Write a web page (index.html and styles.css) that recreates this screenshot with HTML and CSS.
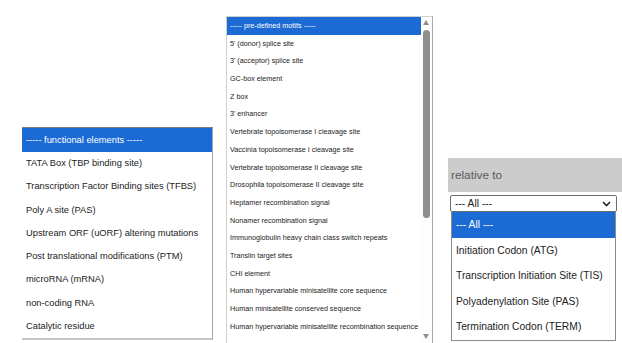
FILE: index.html
```html
<!DOCTYPE html>
<html lang="en">

<head>
    <meta charset="UTF-8">
    <meta name="viewport" content="width=device-width, initial-scale=1.0">
    <title>Motif selection</title>
    <link rel="stylesheet" href="styles.css">
</head>

<body>
    <div class="page">
        <!-- functional elements list -->
        <ul class="list list-functional">
            <li class="list-item selected">----- functional elements -----</li>
            <li class="list-item">TATA Box (TBP binding site)</li>
            <li class="list-item">Transcription Factor Binding sites (TFBS)</li>
            <li class="list-item">Poly A site (PAS)</li>
            <li class="list-item">Upstream ORF (uORF) altering mutations</li>
            <li class="list-item">Post translational modifications (PTM)</li>
            <li class="list-item">microRNA (mRNA)</li>
            <li class="list-item">non-coding RNA</li>
            <li class="list-item">Catalytic residue</li>
        </ul>

        <!-- pre-defined motifs list with scrollbar -->
        <div class="motifs">
            <ul class="list list-motifs">
                <li class="list-item selected">----- pre-defined motifs -----</li>
                <li class="list-item">5' (donor) splice site</li>
                <li class="list-item">3' (acceptor) splice site</li>
                <li class="list-item">GC-box element</li>
                <li class="list-item">Z box</li>
                <li class="list-item">3' enhancer</li>
                <li class="list-item">Vertebrate topoisomerase I cleavage site</li>
                <li class="list-item">Vaccinia topoisomerase I cleavage site</li>
                <li class="list-item">Vertebrate topoisomerase II cleavage site</li>
                <li class="list-item">Drosophila topoisomerase II cleavage site</li>
                <li class="list-item">Heptamer recombination signal</li>
                <li class="list-item">Nonamer recombination signal</li>
                <li class="list-item">Immunoglobulin heavy chain class switch repeats</li>
                <li class="list-item">Translin target sites</li>
                <li class="list-item">CHI element</li>
                <li class="list-item">Human hypervariable minisatellite core sequence</li>
                <li class="list-item">Human minisatellite conserved sequence</li>
                <li class="list-item">Human hypervariable minisatellite recombination sequence</li>
            </ul>
            <div class="scrollbar">
                <span class="arrow arrow-up"></span>
                <span class="thumb"></span>
                <span class="arrow arrow-down"></span>
            </div>
        </div>

        <!-- relative to select, opened -->
        <div class="relative">
            <div class="relative-label">relative to</div>
            <div class="select">
                <span>--- All ---</span>
                <svg class="chevron" width="9" height="6" viewBox="0 0 9 6">
                    <path d="M1 1 L4.5 4.5 L8 1" fill="none" stroke="#222" stroke-width="1.6"/>
                </svg>
            </div>
            <ul class="list dropdown">
                <li class="list-item selected">--- All ---</li>
                <li class="list-item">Initiation Codon (ATG)</li>
                <li class="list-item">Transcription Initiation Site (TIS)</li>
                <li class="list-item">Polyadenylation Site (PAS)</li>
                <li class="list-item">Termination Codon (TERM)</li>
            </ul>
        </div>
    </div>
</body>

</html>
```

FILE: styles.css
```css
body {
    font-family: "Liberation Sans", Arial, sans-serif;
    color: #222;
    margin: 0;
    background: #fff;
    overflow: hidden;
}

.page {
    display: flex;
    align-items: flex-start;
    width: 622px;
    height: 343px;
    overflow: hidden;
}

.list {
    list-style-type: none;
    margin: 0;
    padding: 0;
    background: #fff;
}

.list-item {
    white-space: nowrap;
}

.list-item.selected {
    background-color: #1c6bd5;
    color: #fff;
}

/* functional elements */
.list-functional {
    margin: 127px 0 0 22px;
    width: 190px;
    border-top: 1px solid #7d7d7d;
    border-right: 1px solid #a3a3a3;
    border-bottom: 2px solid #c6c6c6;
    font-size: 9.3px;
}

.list-functional .list-item {
    height: 23.3px;
    line-height: 23.3px;
    padding-left: 4px;
}

.list-functional .list-item.selected {
    height: 24px;
    line-height: 24px;
}

/* pre-defined motifs */
.motifs {
    display: flex;
    margin: 16px 0 0 13px;
    width: 205px;
    height: 340px;
    border: 1px solid #cfcfcf;
    border-right-color: #a8a8a8;
}

.list-motifs {
    flex: 1;
    font-size: 7.2px;
}

.list-motifs .list-item {
    height: 17.7px;
    line-height: 17.7px;
    padding-left: 3px;
}

.scrollbar {
    position: relative;
    width: 11px;
    background: #fdfdfd;
}

.thumb {
    position: absolute;
    left: 2px;
    top: 13px;
    width: 7px;
    height: 188px;
    border-radius: 4px;
    background: #8f8f8f;
}

.arrow {
    position: absolute;
    left: 2px;
    width: 0;
    height: 0;
    border-left: 3.5px solid transparent;
    border-right: 3.5px solid transparent;
}

.arrow-up {
    top: 3px;
    border-bottom: 5px solid #8f8f8f;
}

.arrow-down {
    top: 317px;
    border-top: 5px solid #8f8f8f;
}

/* relative to */
.relative {
    position: relative;
    flex: 1;
    margin: 158px 0 0 15px;
}

.relative-label {
    height: 34px;
    line-height: 34px;
    padding-left: 3px;
    background: #cccccc;
    color: #5a5a5a;
    font-size: 11.8px;
}

.select {
    display: flex;
    align-items: center;
    justify-content: space-between;
    box-sizing: border-box;
    margin: 3px 0 0 2px;
    width: 167px;
    height: 17px;
    padding: 0 5px 0 4px;
    border: 1px solid #6e6e6e;
    border-radius: 2px;
    background: #fff;
    font-size: 10.3px;
}

.dropdown {
    position: absolute;
    top: 54px;
    left: 3px;
    width: 163px;
    border: 1px solid #8c8c8c;
    border-top: none;
    font-size: 10.3px;
}

.dropdown .list-item {
    height: 25.5px;
    line-height: 25.5px;
    padding-left: 4px;
}
```
